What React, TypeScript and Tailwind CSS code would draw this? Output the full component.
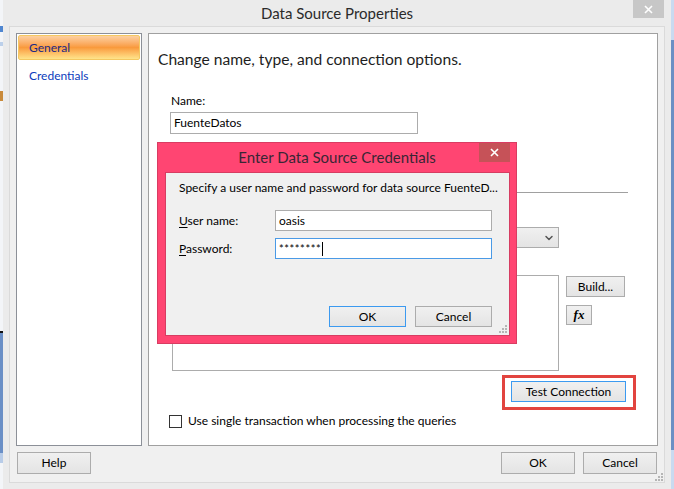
import { ChevronDown } from 'lucide-react';

const ui = "font-['Lato','Noto_Sans',sans-serif]";

function Grip({ className }: { className?: string }) {
  return (
    <svg width="10" height="10" viewBox="0 0 10 10" className={className}>
      {[
        [8, 2],
        [8, 5],
        [5, 5],
        [8, 8],
        [5, 8],
        [2, 8]
      ].map(([x, y]) => (
        <rect key={`${x}-${y}`} x={x - 1} y={y - 1} width="2" height="2" fill="#b5b5b5" />
      ))}
    </svg>
  );
}

function CloseGlyph() {
  return (
    <svg width="9" height="9" viewBox="0 0 9 9">
      <path d="M1 1 L8 8 M8 1 L1 8" stroke="white" strokeWidth="1.6" />
    </svg>
  );
}

function WinButton({ children, className = '', focus = false }: { children: React.ReactNode; className?: string; focus?: boolean }) {
  return (
    <button
      type="button"
      className={`flex items-center justify-center border bg-linear-to-b from-[#f0f0f0] to-[#e4e4e4] text-[12px] text-black ${
        focus ? 'border-[#3c9af0]' : 'border-[#acacac]'
      } ${className}`}
    >
      {children}
    </button>
  );
}

function CredentialsDialog() {
  return (
    <div className="absolute left-[8px] top-[108px] flex h-[202px] w-[360px] flex-col border border-[#d93c62] bg-[#ff4572]">
      <div className="relative flex h-[29px] items-center justify-center">
        <span className="text-[15px] text-[#3a2635]">Enter Data Source Credentials</span>
        <div className="absolute right-[6px] top-0 flex h-[19px] w-[31px] items-center justify-center bg-[#c65258]">
          <CloseGlyph />
        </div>
      </div>
      <div className="relative mb-[7px] ml-[7px] mr-[6px] flex flex-1 flex-col border border-[#d63d62] bg-[#f0f0f0] pl-[13px] pt-[7px] text-[12px] leading-[16px] text-black">
        <p>Specify a user name and password for data source FuenteD...</p>
        <div className="mt-[14px] flex items-center">
          <span className="w-[96px]">
            <span className="underline underline-offset-2">U</span>ser name:
          </span>
          <div className="flex h-[21px] w-[217px] items-center border border-[#acacac] bg-white px-[3px]">oasis</div>
        </div>
        <div className="mt-[7px] flex items-center">
          <span className="w-[96px]">
            <span className="underline underline-offset-2">P</span>assword:
          </span>
          <div className="flex h-[21px] w-[217px] items-center border border-[#4a9ae6] bg-white px-[3px]">
            <span className="text-[11px] tracking-[0.6px]">********</span>
            <span className="ml-[1px] h-[14px] w-px bg-black" />
          </div>
        </div>
        <div className="mt-[47px] flex justify-end gap-[9px] pr-[17px]">
          <WinButton focus className="h-[21px] w-[77px]">OK</WinButton>
          <WinButton className="h-[21px] w-[77px]">Cancel</WinButton>
        </div>
        <Grip className="absolute bottom-[1px] right-[1px]" />
      </div>
    </div>
  );
}

export default function App() {
  return (
    <div className={`flex h-[489px] w-[674px] overflow-hidden bg-white ${ui}`}>
      <div className="flex w-[3px] flex-col bg-[#f3f5f8]">
        <div className="mt-[26px] h-[6px] bg-[#4f86d0]" />
        <div className="mt-[10px] h-[4px] bg-[#bcd0ea]" />
        <div className="mt-[45px] h-[10px] bg-[#c98a3a]" />
        <div className="mt-[230px] h-[2px] bg-[#111]" />
        <div className="h-[120px] bg-[#6a8fc6]" />
        <div className="h-[10px] bg-[#b8cce8]" />
      </div>

      <div className="flex w-[668px] flex-col bg-[#ebebeb]">
        <div className="relative flex h-[26px] items-center justify-center">
          <span className="text-[15px] text-[#2a2a2a]">Data Source Properties</span>
          <div className="absolute right-[7px] top-0 flex h-[18px] w-[31px] items-center justify-center bg-[#c7c7c7]">
            <CloseGlyph />
          </div>
        </div>

        <div className="relative mx-[6px] mb-[6px] flex flex-1 flex-col border border-[#dadada] bg-[#f0f0f0]">
          <div className="flex gap-[6px] px-[6px] pt-[6px]">
            <div className="h-[413px] w-[126px] border border-[#8c9098] bg-white p-[1px]">
              <div className="flex h-[25px] items-center rounded-[2px] border border-[#f4c862] bg-linear-to-b from-[#fcd0a0] via-[#f99a3c] to-[#fee48a] pl-[10px] text-[12px] text-[#1c2a86]">
                General
              </div>
              <div className="mt-[8px] pl-[11px] text-[12px] leading-[16px] text-[#0c3cbc]">Credentials</div>
            </div>

            <div className="relative h-[413px] flex-1 border border-[#a0a0a0] bg-white">
              <h1 className="ml-[9px] mt-[15px] text-[15.6px] leading-[20px] text-[#1e1e1e]">
                Change name, type, and connection options.
              </h1>

              <div className="flex flex-col pl-[21px] text-[12px] leading-[16px] text-black">
                <span className="ml-[1px] mt-[24px]">Name:</span>
                <div className="mt-[3px] flex h-[22px] w-[248px] items-center border border-[#acacac] px-[3px]">FuenteDatos</div>

                <div className="mt-[58px] h-px w-[458px] bg-[#a0a0a0]" />

                <div className="ml-[2px] mt-[34px] flex h-[21px] w-[387px] items-center justify-end border border-[#acacac] bg-linear-to-b from-[#f0f0f0] to-[#e4e4e4] pr-[3px]">
                  <ChevronDown className="h-[12px] w-[12px] text-[#555]" strokeWidth={3} />
                </div>

                <div className="ml-[2px] mt-[27px] flex">
                  <div className="h-[96px] w-[387px] border border-[#acacac]" />
                  <div className="ml-[7px] mt-[1px] flex flex-col">
                    <WinButton className="h-[21px] w-[59px]">Build...</WinButton>
                    <WinButton className="mt-[8px] h-[20px] w-[26px]">
                      <span className="font-['Liberation_Serif',serif] text-[13px] font-bold italic">fx</span>
                    </WinButton>
                  </div>
                </div>

                <div className="ml-[332px] mt-[4px] h-[35px] w-[134px] border-[3px] border-[#e2443f] pl-[6px] pt-[3px]">
                  <WinButton focus className="h-[21px] w-[115px]">Test Connection</WinButton>
                </div>

                <div className="-ml-[1px] mt-[3px] flex items-center">
                  <div className="h-[13px] w-[13px] border border-[#333] bg-white" />
                  <span className="ml-[6px]">Use single transaction when processing the queries</span>
                </div>
              </div>

              <CredentialsDialog />
            </div>
          </div>

          <div className="flex items-center px-[7px] pt-[6px]">
            <WinButton className="h-[22px] w-[74px]">Help</WinButton>
            <div className="ml-auto flex gap-[8px]">
              <WinButton className="h-[22px] w-[74px]">OK</WinButton>
              <WinButton className="h-[22px] w-[74px]">Cancel</WinButton>
            </div>
          </div>
          <Grip className="absolute bottom-[0px] right-[0px]" />
        </div>
      </div>

      <div className="flex w-[3px] flex-col bg-[#c9daf0]">
        <div className="mt-[40px] h-[410px] bg-[#6b8fc4]" />
      </div>
    </div>
  );
}
